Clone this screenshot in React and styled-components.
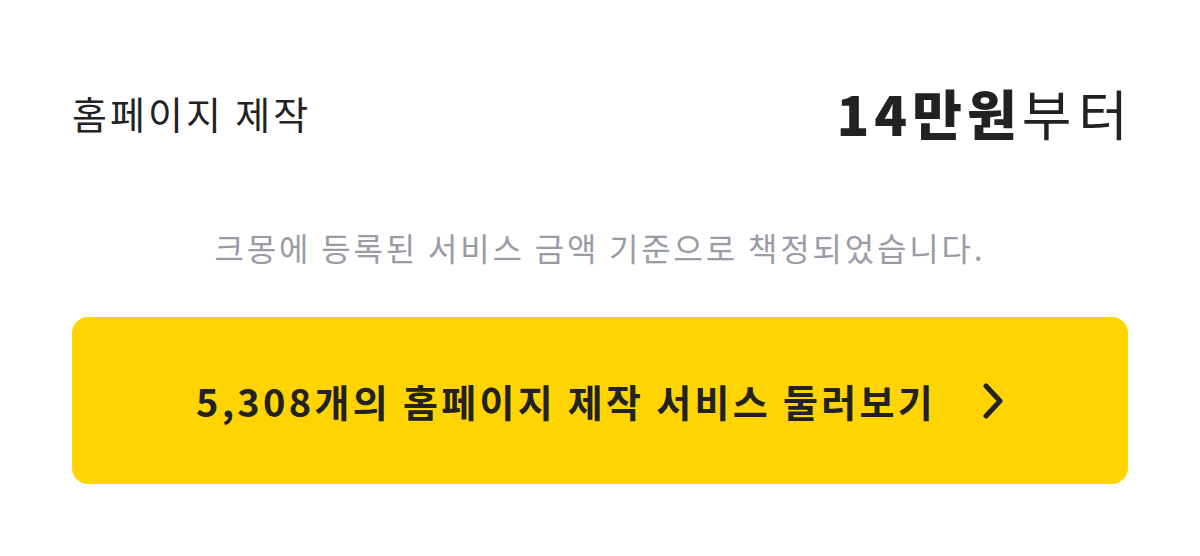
import React from 'react';
import styled, { createGlobalStyle } from 'styled-components';

const COLOR_FONT = '#222222';
const COLOR_SUB = '#9b9ba6';
const COLOR_YELLOW = '#FFD400';

const GlobalStyle = createGlobalStyle`
  html, body {
    margin: 0;
    padding: 0;
    background: #ffffff;
  }
  body {
    font-family: 'Noto Sans CJK KR', 'Noto Sans', sans-serif;
    color: ${COLOR_FONT};
  }
`;

const Card = styled.section`
  width: 1200px;
  height: 556px;
  box-sizing: border-box;
  padding: 72px 72px 0;
  display: flex;
  flex-direction: column;
`;

const Header = styled.div`
  display: flex;
  justify-content: space-between;
  align-items: center;
  height: 80px;
`;

const Title = styled.h2`
  margin: 0;
  font-size: 38px;
  font-weight: 400;
  letter-spacing: 3px;
  color: ${COLOR_FONT};
`;

const Price = styled.p`
  margin: 0 -7px 0 0;
  font-size: 54px;
  font-weight: 400;
  letter-spacing: 7px;
  color: ${COLOR_FONT};
  strong {
    font-weight: 900;
    letter-spacing: 5px;
  }
`;

const Notice = styled.p`
  margin: 72px 0 0;
  text-align: center;
  font-size: 32px;
  font-weight: 400;
  color: ${COLOR_SUB};
  letter-spacing: 2.8px;
`;

const MoreButton = styled.a`
  margin-top: 47px;
  height: 167px;
  border-radius: 16px;
  background: ${COLOR_YELLOW};
  display: flex;
  align-items: center;
  justify-content: center;
  gap: 46px;
  color: ${COLOR_FONT};
  text-decoration: none;
  font-size: 38px;
  font-weight: 700;
  letter-spacing: 3.3px;
  svg {
    flex: none;
  }
`;

export default function App() {
  return (
    <>
      <GlobalStyle />
      <Card>
        <Header>
          <Title>홈페이지 제작</Title>
          <Price>
            <strong>14만원</strong>부터
          </Price>
        </Header>
        <Notice>크몽에 등록된 서비스 금액 기준으로 책정되었습니다.</Notice>
        <MoreButton href="#">
          <span>5,308개의 홈페이지 제작 서비스 둘러보기</span>
          <svg width="22" height="36" viewBox="0 0 22 36">
            <path d="M4 3 L18 18 L4 33" fill="none" stroke={COLOR_FONT} strokeWidth="5" strokeLinecap="round" strokeLinejoin="round" />
          </svg>
        </MoreButton>
      </Card>
    </>
  );
}
